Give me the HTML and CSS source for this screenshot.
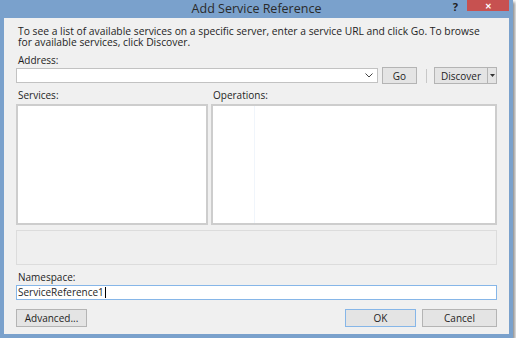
FILE: index.html
```html
<!DOCTYPE html>
<html lang="en">
<head>
    <meta charset="UTF-8">
    <title>Add Service Reference</title>
    <link rel="stylesheet" href="styles.css">
</head>
<body>
    <div class="ventana">
        <!-- Barra de título -->
        <div class="titulo">
            <span></span>
            <span class="titulo-texto">Add Service Reference</span>
            <div class="controles">
                <span class="ayuda">?</span>
                <span class="cerrar">&#x2715;</span>
            </div>
        </div>
        <div class="cliente">
            <p class="intro">To see a list of available services on a specific server, enter a service URL and click Go. To browse for available services, click Discover.</p>
            <label class="etiqueta">Address:</label>
            <div class="fila-direccion">
                <div class="combo">
                    <svg width="8" height="5" viewBox="0 0 8 5"><path d="M0.5 0.5 L4 4 L7.5 0.5" fill="none" stroke="#444" stroke-width="1"/></svg>
                </div>
                <button class="boton boton-go">Go</button>
                <span class="separador"></span>
                <div class="dividido">
                    <button class="boton boton-discover">Discover</button>
                    <button class="boton boton-flecha">
                        <svg width="5" height="3" viewBox="0 0 5 3"><path d="M0 0 H5 L2.5 3 Z" fill="#333"/></svg>
                    </button>
                </div>
            </div>
            <div class="paneles">
                <div class="columna">
                    <label class="etiqueta">Services:</label>
                    <div class="lista"></div>
                </div>
                <div class="columna">
                    <label class="etiqueta">Operations:</label>
                    <div class="lista lista-operaciones"><span class="linea"></span></div>
                </div>
            </div>
            <div class="descripcion"></div>
            <label class="etiqueta etiqueta-ns">Namespace:</label>
            <div class="entrada">ServiceReference1<span class="cursor"></span></div>
            <div class="fila-botones">
                <button class="boton boton-grande">Advanced...</button>
                <span class="espacio"></span>
                <button class="boton boton-grande boton-ok">OK</button>
                <button class="boton boton-grande boton-cancel">Cancel</button>
            </div>
        </div>
    </div>
</body>
</html>
```

FILE: styles.css
```css
body {
    margin: 0;
    background: #ffffff;
    font-family: "Open Sans", "Noto Sans", sans-serif;
    font-size: 10px;
    color: #1e1e1e;
}
.ventana {
    width: 505px;
    height: 334px;
    padding: 0 4px 4px 4px;
    background: #7aa1cc;
    display: flex;
    flex-direction: column;
    box-shadow: 2px 2px 3px rgba(0, 0, 0, 0.45);
}
.titulo {
    height: 18px;
    display: grid;
    grid-template-columns: 1fr auto 1fr;
    align-items: start;
}
.titulo-texto {
    font-size: 12.5px;
    line-height: 17px;
    color: #2a2a2a;
}
.controles {
    justify-self: end;
    display: flex;
    align-items: flex-start;
}
.ayuda {
    font-size: 11px;
    font-weight: bold;
    line-height: 13px;
    color: #222;
    margin-right: 9px;
}
.cerrar {
    width: 42px;
    height: 11px;
    background: #c75150;
    color: #ffffff;
    font-size: 8px;
    font-weight: bold;
    line-height: 11px;
    text-align: center;
}
.cliente {
    flex: 1;
    background: #f0f0f0;
    padding: 8px 12px 0 12px;
    display: flex;
    flex-direction: column;
}
.intro {
    margin: 0;
    font-size: 10.3px;
    line-height: 11px;
    padding: 0 10px 0 2px;
}
.etiqueta {
    display: block;
    line-height: 11px;
    padding-left: 2px;
}
.intro + .etiqueta {
    margin-top: 7px;
}
.fila-direccion {
    display: flex;
    align-items: center;
    margin-top: 1px;
    height: 17px;
}
.combo {
    width: 362px;
    height: 15px;
    background: #fff;
    border: 1px solid #c2c2c2;
    display: flex;
    align-items: center;
    justify-content: flex-end;
    padding-right: 4px;
    box-sizing: border-box;
}
.boton {
    font-family: inherit;
    font-size: 10px;
    color: #1e1e1e;
    background: #e4e4e4;
    border: 1px solid #b4b4b4;
    padding: 0;
    margin: 0;
    height: 17px;
    line-height: 14px;
}
.boton-go {
    width: 35px;
    margin-left: 4px;
}
.separador {
    width: 1px;
    height: 14px;
    background: #c8c8c8;
    margin: 0 7px 0 9px;
}
.dividido {
    display: flex;
}
.boton-discover {
    width: 54px;
}
.boton-flecha {
    width: 9px;
    border-left: none;
    display: flex;
    align-items: center;
    justify-content: center;
}
.paneles {
    display: grid;
    grid-template-columns: 192px 1fr;
    gap: 3px;
    margin-top: 6px;
}
.columna .etiqueta {
    margin-bottom: 3px;
}
.lista {
    height: 117px;
    background: #fff;
    border: 2px solid #cdcdcd;
}
.lista-operaciones {
    display: flex;
}
.linea {
    width: 1px;
    margin-left: 41px;
    background: #f0f5fb;
}
.descripcion {
    height: 33px;
    margin-top: 5px;
    border: 1px solid #dcdcdc;
    background: #efefef;
}
.etiqueta-ns {
    margin-top: 7px;
}
.entrada {
    height: 13px;
    margin-top: 2px;
    background: #fff;
    border: 1px solid #86b6e8;
    padding-left: 1px;
    line-height: 13px;
    display: flex;
    align-items: center;
}
.cursor {
    width: 1px;
    height: 11px;
    background: #000;
    margin-left: 1px;
}
.fila-botones {
    display: flex;
    margin-top: 9px;
}
.espacio {
    flex: 1;
}
.boton-grande {
    width: 71px;
    height: 18px;
}
.boton-ok {
    border-color: #86b6e8;
}
.boton-cancel {
    width: 75px;
    margin-left: 6px;
}
```
